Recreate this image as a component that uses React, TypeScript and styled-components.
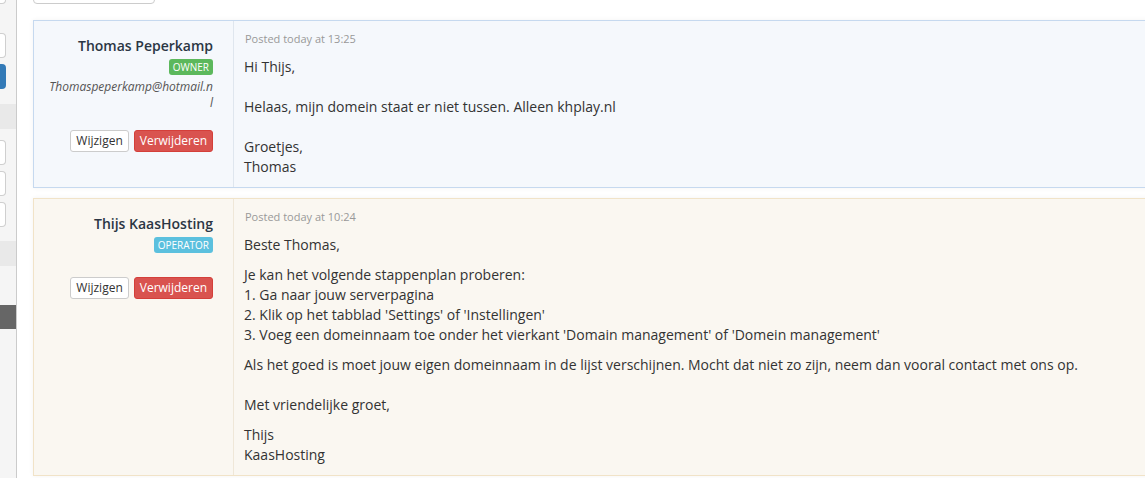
import styled, { createGlobalStyle } from 'styled-components'

const GlobalStyle = createGlobalStyle`
  html, body {
    margin: 0;
    padding: 0;
    background: #fff;
    overflow: hidden;
  }
  body {
    font-family: "Open Sans", "DejaVu Sans", sans-serif;
    color: #333;
  }
`

const Page = styled.div`
  display: flex;
  height: 100vh;
  overflow: hidden;
`

const Sidebar = styled.div`
  width: 16px;
  flex-shrink: 0;
  background: #f5f5f5;
  border-right: 1px solid #cbcbcb;
  display: flex;
  flex-direction: column;
  align-items: flex-start;
`

const SideInput = styled.div<{ $gap: number }>`
  width: 6px;
  height: 25px;
  flex-shrink: 0;
  box-sizing: border-box;
  margin-top: ${(p) => p.$gap}px;
  background: #fff;
  border: 1px solid #cfcfcf;
  border-left: none;
  border-radius: 0 4px 4px 0;
`

const SideButton = styled.div<{ $gap: number }>`
  width: 6px;
  height: 25px;
  flex-shrink: 0;
  margin-top: ${(p) => p.$gap}px;
  background: #337ab7;
  border-radius: 0 4px 4px 0;
`

const SideBand = styled.div<{ $gap: number; $dark?: boolean }>`
  align-self: stretch;
  flex-shrink: 0;
  height: ${(p) => (p.$dark ? 24 : 25)}px;
  margin-top: ${(p) => p.$gap}px;
  background: ${(p) => (p.$dark ? '#666' : '#e9e9e9')};
`

const Main = styled.div`
  flex: 1;
  min-width: 0;
  padding-left: 16px;
  display: flex;
  flex-direction: column;
`

const TopButton = styled.div`
  width: 122px;
  height: 22px;
  flex-shrink: 0;
  box-sizing: border-box;
  margin-top: -18px;
  margin-bottom: 16px;
  background: #fff;
  border: 1px solid #cccccc;
  border-radius: 4px;
`

const Post = styled.div<{ $tone: 'client' | 'staff' }>`
  display: flex;
  margin-right: -40px;
  margin-bottom: 10px;
  flex-shrink: 0;
  background: ${(p) => (p.$tone === 'client' ? '#f5f8fc' : '#faf7f1')};
  border: 1px solid ${(p) => (p.$tone === 'client' ? '#c6d9ef' : '#f1e3c8')};
  box-shadow: 0 0 5px rgba(0, 0, 0, 0.05);
`

const Author = styled.div<{ $tone: 'client' | 'staff' }>`
  width: 200px;
  box-sizing: border-box;
  flex-shrink: 0;
  padding: 15px 20px 15px 14px;
  text-align: right;
  border-right: 1px solid ${(p) => (p.$tone === 'client' ? '#dfe6ee' : '#efe7d8')};
`

const Name = styled.div`
  font-size: 14px;
  font-weight: 600;
  line-height: 20px;
  color: #2b3644;
`

const BadgeRow = styled.div`
  line-height: 0;
  margin-bottom: 4px;
`

const Badge = styled.span<{ $color: string }>`
  display: inline-block;
  margin-top: 3px;
  padding: 0 4px;
  font-size: 10px;
  line-height: 16px;
  color: #fff;
  background: ${(p) => p.$color};
  border-radius: 3px;
  text-transform: uppercase;
`

const Email = styled.div`
  margin-top: 1px;
  font-size: 12px;
  font-style: italic;
  line-height: 16px;
  color: #555;
  word-break: break-all;
`

const Actions = styled.div<{ $gap: number }>`
  display: flex;
  justify-content: flex-end;
  gap: 5px;
  margin-top: ${(p) => p.$gap}px;
`

const SmallButton = styled.button<{ $danger?: boolean }>`
  font-family: "Open Sans", "DejaVu Sans", sans-serif;
  font-size: 12px;
  line-height: 18px;
  padding: 1px 5px;
  margin: 0;
  border-radius: 3px;
  border: 1px solid ${(p) => (p.$danger ? '#d43f3a' : '#cccccc')};
  background: ${(p) => (p.$danger ? '#d9534f' : '#fff')};
  color: ${(p) => (p.$danger ? '#fff' : '#333')};
  cursor: pointer;
`

const Message = styled.div`
  flex: 1;
  padding: 10px 10px 0 10px;
`

const Posted = styled.div`
  font-size: 11px;
  line-height: 16px;
  color: #999;
  margin-bottom: 10px;
  padding-left: 1px;
`

const Body = styled.div`
  font-size: 14px;
  line-height: 20px;
  color: #333;

  p {
    margin: 0 0 10px;
  }
`

function App() {
  return (
    <>
      <GlobalStyle />
      <Page>
        <Sidebar>
          <SideInput $gap={-21} />
          <SideInput $gap={29} />
          <SideButton $gap={6} />
          <SideBand $gap={15} />
          <SideInput $gap={11} />
          <SideInput $gap={6} />
          <SideInput $gap={6} />
          <SideBand $gap={14} />
          <SideBand $gap={39} $dark />
        </Sidebar>
        <Main>
          <TopButton />
          <Post $tone="client">
            <Author $tone="client">
              <Name>Thomas Peperkamp</Name>
              <BadgeRow>
                <Badge $color="#5cb85c">Owner</Badge>
              </BadgeRow>
              <Email>Thomaspeperkamp@hotmail.nl</Email>
              <Actions $gap={19}>
                <SmallButton>Wijzigen</SmallButton>
                <SmallButton $danger>Verwijderen</SmallButton>
              </Actions>
            </Author>
            <Message>
              <Posted>Posted today at 13:25</Posted>
              <Body>
                <p>
                  Hi Thijs,
                  <br />
                  <br />
                  Helaas, mijn domein staat er niet tussen. Alleen khplay.nl
                  <br />
                  <br />
                  Groetjes,
                  <br />
                  Thomas
                </p>
              </Body>
            </Message>
          </Post>
          <Post $tone="staff">
            <Author $tone="staff">
              <Name>Thijs KaasHosting</Name>
              <BadgeRow>
                <Badge $color="#5bc0de">Operator</Badge>
              </BadgeRow>
              <Actions $gap={24}>
                <SmallButton>Wijzigen</SmallButton>
                <SmallButton $danger>Verwijderen</SmallButton>
              </Actions>
            </Author>
            <Message>
              <Posted>Posted today at 10:24</Posted>
              <Body>
                <p>Beste Thomas,</p>
                <p>
                  Je kan het volgende stappenplan proberen:
                  <br />
                  1. Ga naar jouw serverpagina
                  <br />
                  2. Klik op het tabblad 'Settings' of 'Instellingen'
                  <br />
                  3. Voeg een domeinnaam toe onder het vierkant 'Domain management' of 'Domein management'
                </p>
                <p>
                  Als het goed is moet jouw eigen domeinnaam in de lijst verschijnen. Mocht dat niet zo zijn, neem dan vooral contact met ons op.
                  <br />
                  <br />
                  Met vriendelijke groet,
                </p>
                <p>
                  Thijs
                  <br />
                  KaasHosting
                </p>
              </Body>
            </Message>
          </Post>
        </Main>
      </Page>
    </>
  )
}

export default App
